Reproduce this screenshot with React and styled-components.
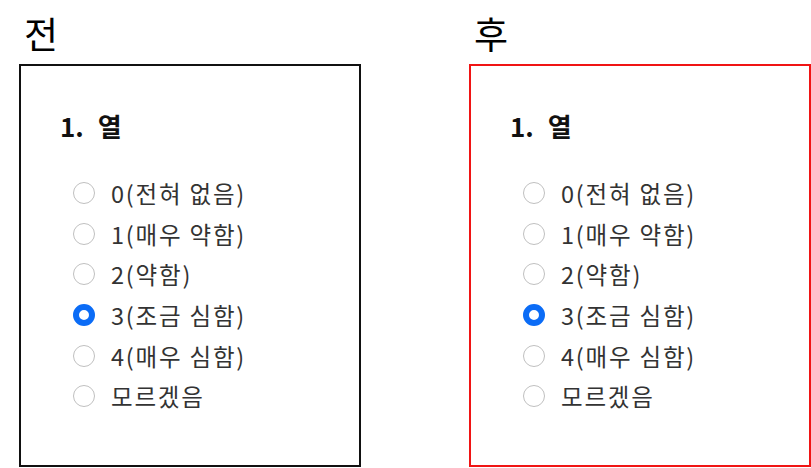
import React from 'react';
import styled, { createGlobalStyle } from 'styled-components';

const GlobalStyle = createGlobalStyle`
  html, body {
    margin: 0;
    padding: 0;
    background: #ffffff;
  }
  body {
    font-family: "Noto Sans CJK KR", "Noto Sans", sans-serif;
    color: #000;
  }
`;

const Page = styled.div`
  display: flex;
  gap: 108px;
  padding: 0 0 0 19px;
  width: 811px;
  height: 468px;
  box-sizing: border-box;
`;

const Column = styled.div`
  display: flex;
  flex-direction: column;
  width: 342px;
`;

const Caption = styled.div`
  font-size: 37px;
  line-height: 66px;
  height: 64px;
  padding-left: 5px;
  color: #000;
`;

const Card = styled.div`
  box-sizing: border-box;
  width: 342px;
  height: 403px;
  border: 2px solid ${p => p.$color};
  padding: 40px 0 0 39px;
`;

const Question = styled.h3`
  margin: 0 0 27px;
  font-size: 26px;
  font-weight: 700;
  line-height: 40px;
  word-spacing: 8px;
  color: #111;
`;

const Options = styled.div`
  display: flex;
  flex-direction: column;
`;

const Option = styled.label`
  display: flex;
  align-items: center;
  height: 40.6px;
  gap: 16px;
  font-size: 23.5px;
  letter-spacing: 1.8px;
  color: #333;
  padding-left: 13px;
`;

const Radio = styled.span`
  box-sizing: border-box;
  width: 22px;
  height: 22px;
  border-radius: 50%;
  flex-shrink: 0;
  background: #fff;
  border: ${p => (p.$checked ? '6px solid #0b6cf6' : '1.6px solid #c0c0c0')};
`;

const items = ['0(전혀 없음)', '1(매우 약함)', '2(약함)', '3(조금 심함)', '4(매우 심함)', '모르겠음'];

function Panel({ caption, color }) {
  return (
    <Column>
      <Caption>{caption}</Caption>
      <Card $color={color}>
        <Question>1. 열</Question>
        <Options>
          {items.map((t, i) => (
            <Option key={t}>
              <Radio $checked={i === 3} />
              {t}
            </Option>
          ))}
        </Options>
      </Card>
    </Column>
  );
}

export default function App() {
  return (
    <>
      <GlobalStyle />
      <Page>
        <Panel caption="전" color="#111" />
        <Panel caption="후" color="#f01414" />
      </Page>
    </>
  );
}
